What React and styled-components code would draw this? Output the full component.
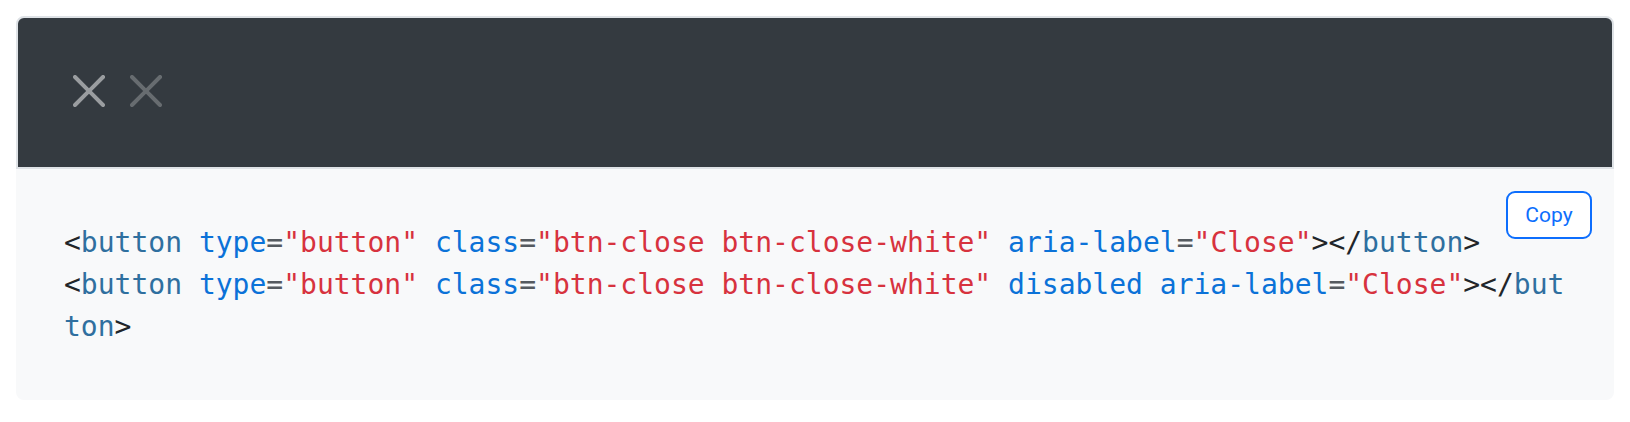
import React from "react";
import styled, { createGlobalStyle } from "styled-components";

const Global = createGlobalStyle`
  html, body { margin: 0; padding: 0; background: #fff; }
  body { font-family: Roboto, "Liberation Sans", Arial, sans-serif; }
`;

const Page = styled.div`
  padding: 16px;
`;

const Example = styled.div`
  display: flex;
  align-items: flex-start;
  gap: 9px;
  height: 48px;
  padding: 49px 47px 52px;
  background: #343a40;
  border: 2px solid #dee2e6;
  border-radius: 8px 8px 0 0;
`;

const CloseButton = styled.button`
  box-sizing: content-box;
  width: 32px;
  height: 32px;
  padding: 8px;
  margin: 0;
  border: 0;
  background: transparent;
  display: flex;
  align-items: center;
  justify-content: center;
  opacity: ${(p) => (p.disabled ? 0.25 : 0.5)};
  cursor: ${(p) => (p.disabled ? "default" : "pointer")};
  svg { display: block; }
`;

const Highlight = styled.div`
  position: relative;
  background: #f8f9fa;
  padding: 53px 48px 52px;
  border-radius: 0 0 8px 8px;
`;

const CopyButton = styled.button`
  position: absolute;
  top: 22px;
  right: 22px;
  box-sizing: border-box;
  width: 86px;
  height: 48px;
  padding: 8px 0;
  border: 2px solid #0d6efd;
  border-radius: 9px;
  background: #fff;
  color: #0d6efd;
  font-family: Roboto, "Liberation Sans", Arial, sans-serif;
  font-size: 21px;
  line-height: 28px;
  text-align: center;
`;

const Pre = styled.pre`
  margin: 0;
  font-family: "DejaVu Sans Mono", "Liberation Mono", monospace;
  font-size: 28px;
  line-height: 42px;
  color: #212529;
  white-space: pre-wrap;
  word-break: break-all;
`;

const Tok = styled.span`
  color: ${(p) =>
    ({
      tag: "#2f6f9f",
      attr: "#0b72d8",
      str: "#d7323e",
      eq: "#555a5f",
      punct: "#212529",
    })[p.$k]};
`;

const XIcon = () => (
  <svg width="32" height="32" viewBox="0 0 16 16" fill="#fff">
    <path d="M.293.293a1 1 0 011.414 0L8 6.586 14.293.293a1 1 0 111.414 1.414L9.414 8l6.293 6.293a1 1 0 01-1.414 1.414L8 9.414l-6.293 6.293a1 1 0 01-1.414-1.414L6.586 8 .293 1.707a1 1 0 010-1.414z" />
  </svg>
);

const Attr = ({ name, value }) => (
  <>
    {" "}
    <Tok $k="attr">{name}</Tok>
    {value !== undefined && (
      <>
        <Tok $k="eq">=</Tok>
        <Tok $k="str">"{value}"</Tok>
      </>
    )}
  </>
);

const CodeLine = ({ disabled }) => (
  <>
    <Tok $k="punct">&lt;</Tok>
    <Tok $k="tag">button</Tok>
    <Attr name="type" value="button" />
    <Attr name="class" value="btn-close btn-close-white" />
    {disabled && <Attr name="disabled" />}
    <Attr name="aria-label" value="Close" />
    <Tok $k="punct">&gt;&lt;/</Tok>
    <Tok $k="tag">button</Tok>
    <Tok $k="punct">&gt;</Tok>
  </>
);

export default function App() {
  return (
    <>
      <Global />
      <Page>
        <Example>
          <CloseButton type="button" aria-label="Close">
            <XIcon />
          </CloseButton>
          <CloseButton type="button" aria-label="Close" disabled>
            <XIcon />
          </CloseButton>
        </Example>
        <Highlight>
          <CopyButton type="button">Copy</CopyButton>
          <Pre>
            <CodeLine />
            {"\n"}
            <CodeLine disabled />
          </Pre>
        </Highlight>
      </Page>
    </>
  );
}
